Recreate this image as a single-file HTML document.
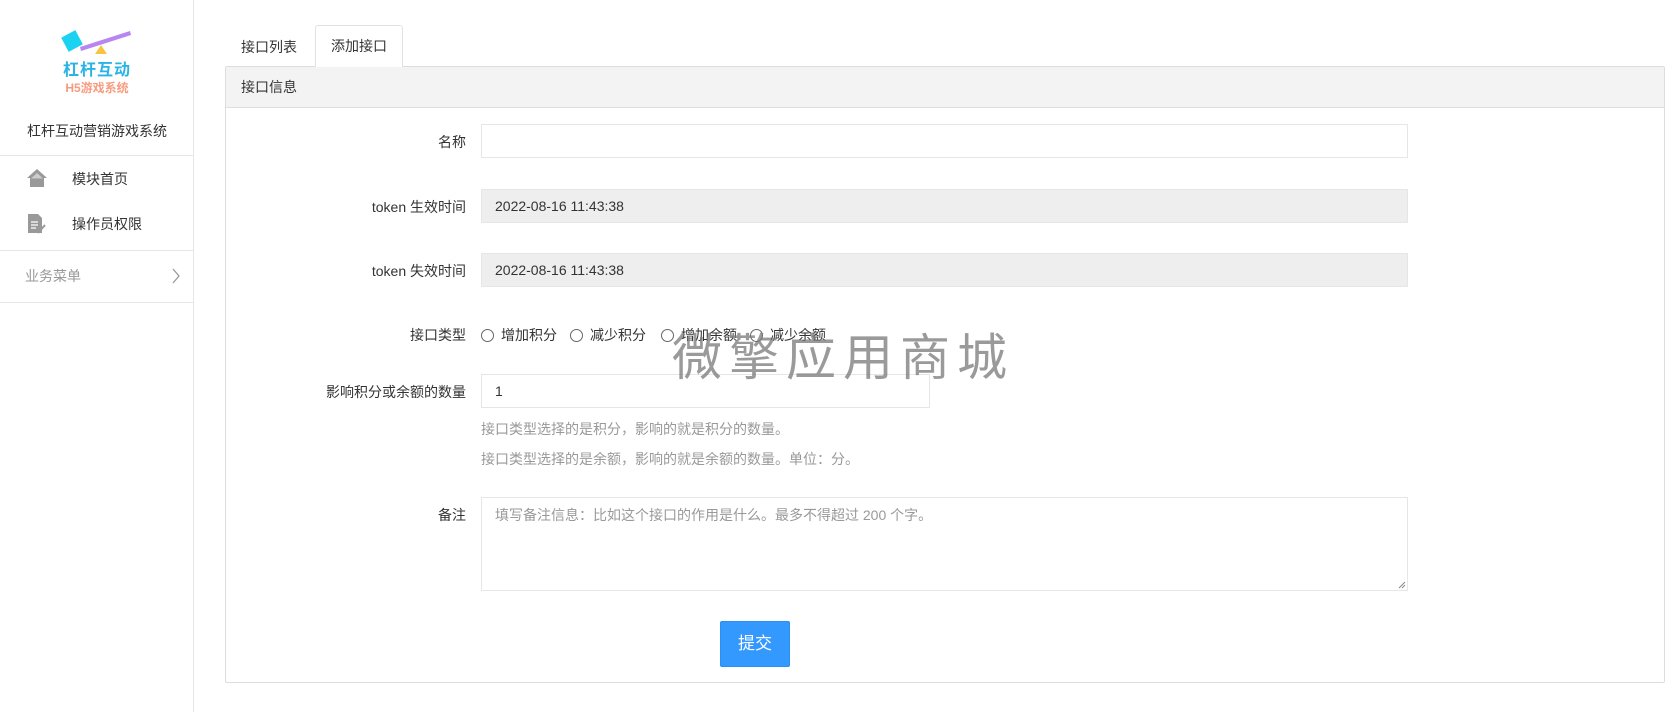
<!DOCTYPE html>
<html><head><meta charset="utf-8"><style>
*{box-sizing:border-box;margin:0;padding:0}
body{width:1680px;height:712px;background:#fff;font-family:"Liberation Sans","Noto Sans CJK SC",sans-serif;font-size:14px;color:#333;position:relative;overflow:hidden}
.a{position:absolute}
.sb{left:0;top:0;width:194px;height:712px;border-right:1px solid #e6e6e6}
.hr{height:1px;background:#e6e6e6;left:0;width:194px}
.lbl{right:1214px;text-align:right;white-space:nowrap}
.inp{border:1px solid #e6e6e6;background:#fff;padding-left:13px;line-height:32px;font-size:14px}
.dis{background:#eee}
.rad{display:inline-block;width:13px;height:13px;border:1px solid #666;border-radius:50%;vertical-align:-2px;margin-right:7px}
.help{left:481px;color:#999;font-size:14px}
.ri{top:325px;white-space:nowrap}
</style></head><body>
<div class="a sb"></div>
<svg class="a" style="left:59px;top:27px" width="74" height="44" viewBox="0 0 74 44">
<rect x="5" y="6" width="16" height="16" transform="rotate(-28 13 14)" fill="#1bd3f0"/>
<polygon points="21,20 71,4 72,8 22,24" fill="#b985f0"/>
<polygon points="42,18 36,27 48,27" fill="#f8c540"/>
</svg>
<div class="a" style="left:55px;top:56px;width:84px;text-align:center;color:#2ab3e6;font-weight:bold;font-size:16px;letter-spacing:1px">杠杆互动</div>
<div class="a" style="left:55px;top:79px;width:84px;text-align:center;color:#f89a7e;font-weight:bold;font-size:12px">H5游戏系统</div>
<div class="a" style="left:0;top:121px;width:194px;text-align:center;font-size:14px">杠杆互动营销游戏系统</div>
<div class="a hr" style="top:155px"></div>
<svg class="a" style="left:26px;top:167px" width="22" height="22" viewBox="0 0 22 22"><path d="M11 2 L1 11 L4 11 L4 20 L18 20 L18 11 L21 11 Z" fill="#999"/><path d="M11 6 L5 11.5 L17 11.5Z" fill="#fff" opacity=".5"/></svg>
<div class="a" style="left:72px;top:169px">模块首页</div>
<svg class="a" style="left:27px;top:213px" width="20" height="22" viewBox="0 0 20 22"><path d="M1 1 H11 L15 5 V20 H1 Z" fill="#999"/><path d="M4 9H11M4 12H11M4 15H9" stroke="#fff" stroke-width="1.3"/><path d="M11 20 L18 12" stroke="#999" stroke-width="2"/></svg>
<div class="a" style="left:72px;top:214px">操作员权限</div>
<div class="a hr" style="top:250px"></div>
<div class="a" style="left:25px;top:266px;color:#999">业务菜单</div>
<svg class="a" style="left:171px;top:268px" width="10" height="16"><path d="M2 1 L8 8 L2 15" stroke="#999" fill="none" stroke-width="1.3"/></svg>
<div class="a hr" style="top:302px"></div>

<div class="a" style="left:241px;top:37px">接口列表</div>
<div class="a" style="left:315px;top:25px;width:88px;height:42px;border:1px solid #e2e2e2;border-bottom:none;border-radius:3px 3px 0 0;background:#fff;z-index:2;text-align:center;line-height:40px">添加接口</div>
<div class="a" style="left:225px;top:66px;width:1440px;height:617px;border:1px solid #ddd;border-radius:2px"></div>
<div class="a" style="left:226px;top:67px;width:1438px;height:41px;background:#f3f3f3;border-bottom:1px solid #ddd;padding-left:15px;line-height:40px">接口信息</div>

<div class="a lbl" style="top:132px">名称</div>
<div class="a inp" style="left:481px;top:124px;width:927px;height:34px"></div>
<div class="a lbl" style="top:197px">token 生效时间</div>
<div class="a inp dis" style="left:481px;top:189px;width:927px;height:34px">2022-08-16 11:43:38</div>
<div class="a lbl" style="top:261px">token 失效时间</div>
<div class="a inp dis" style="left:481px;top:253px;width:927px;height:34px">2022-08-16 11:43:38</div>
<div class="a lbl" style="top:325px">接口类型</div>
<div class="a ri" style="left:481px"><span class="rad"></span>增加积分</div>
<div class="a ri" style="left:570px"><span class="rad"></span>减少积分</div>
<div class="a ri" style="left:661px"><span class="rad"></span>增加余额</div>
<div class="a ri" style="left:750px"><span class="rad"></span>减少余额</div>
<div class="a lbl" style="top:382px">影响积分或余额的数量</div>
<div class="a inp" style="left:481px;top:374px;width:449px;height:34px">1</div>
<div class="a help" style="top:419px">接口类型选择的是积分，影响的就是积分的数量。</div>
<div class="a help" style="top:449px">接口类型选择的是余额，影响的就是余额的数量。单位：分。</div>
<div class="a lbl" style="top:505px">备注</div>
<div class="a inp" style="left:481px;top:497px;width:927px;height:94px;line-height:20px;padding-top:7px;color:#999">填写备注信息：比如这个接口的作用是什么。最多不得超过 200 个字。</div>
<svg class="a" style="left:1398px;top:581px" width="8" height="8"><path d="M7 1L1 7M7 4L4 7" stroke="#888"/></svg>
<div class="a" style="left:720px;top:621px;width:70px;height:46px;background:#3399ff;border:1px solid #2a8fef;border-radius:2px;color:#fff;font-size:17px;text-align:center;line-height:44px">提交</div>
<div class="a" style="left:672px;top:328px;font-size:50px;color:rgba(120,120,120,.75);letter-spacing:7px;white-space:nowrap;line-height:60px">微擎应用商城</div>
</body></html>
